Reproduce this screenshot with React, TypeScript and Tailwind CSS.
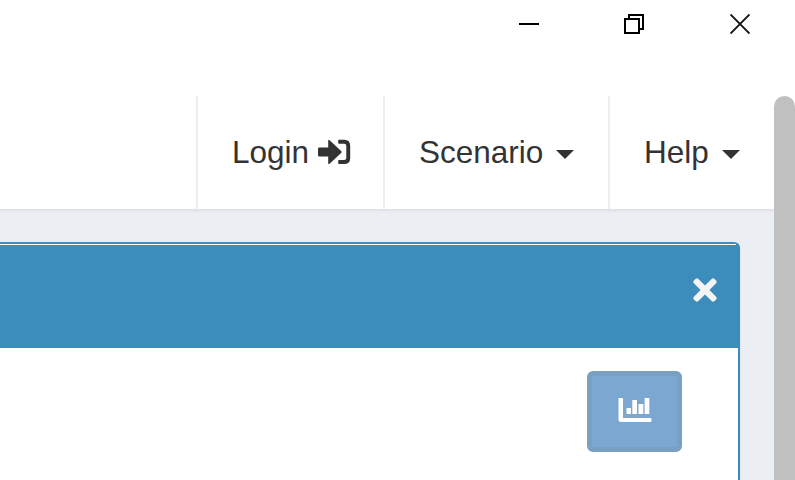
import { FaTimes } from "react-icons/fa";

const INK = "#333333";

function Caret() {
  return (
    <svg className="ml-[13px] mt-[5px] block h-[9px] w-[18px] shrink-0" viewBox="0 0 18 9" fill={INK}>
      <path d="M0 0H18L9 9Z" />
    </svg>
  );
}

function SignInIcon() {
  return (
    <svg className="ml-[8.5px] mt-px block h-[26px] w-[34px] shrink-0" viewBox="0 0 34 26" fill={INK}>
      <path d="M1.2 8.5H10.2V2Q10.2 .2 11.6 1.2L23.4 12.3Q24.1 13 23.4 13.7L11.6 24.8Q10.2 25.8 10.2 24V17.4H1.2Q0 17.4 0 16.2V9.7Q0 8.5 1.2 8.5Z" />
      <path d="M21 .8H26.3Q32.2 .8 32.2 7V19Q32.2 25 26.3 25H21Q20.2 25 20.2 24.2V21.8Q20.2 21 21 21H26.2Q28.3 21 28.3 18.9V7Q28.3 4.8 26.2 4.8H21Q20.2 4.8 20.2 4V1.6Q20.2 .8 21 .8Z" />
    </svg>
  );
}

function TitleBar() {
  return (
    <div className="flex h-24 items-start justify-end pr-[45px] pt-[14px]">
      <svg className="mr-[85px] h-5 w-5" viewBox="0 0 20 20">
        <path d="M0 9H20V11H0Z" />
      </svg>
      <svg className="mr-[86px] h-5 w-5" viewBox="0 0 20 20" fill="none" stroke="#000" strokeWidth="2">
        <path d="M5 5V1H19V15H15M1 5H15V19H1Z" />
      </svg>
      <svg className="h-5 w-5" viewBox="0 0 20 20" fill="none" stroke="#111" strokeWidth="1.9">
        <path d="M.5 .5L19.5 19.5M19.5 .5L.5 19.5" />
      </svg>
    </div>
  );
}

function ChartIcon() {
  return (
    <svg className="mb-[3px] block h-6 w-[34px]" viewBox="0 0 34 24" fill="#fff">
      <path d="M1 0H4Q5 0 5 1V20H32.5Q33.5 20 33.5 21V23Q33.5 24 32.5 24H3Q.5 24 .5 21.5V.5Q.5 0 1 0Z" />
      <path d="M8.5 10H13V16H8.5ZM14.3 2H19V16H14.3ZM20.5 6H25.3V16H20.5ZM26.6 0H31.3V16H26.6Z" />
    </svg>
  );
}

export default function App() {
  return (
    <div className="flex h-[480px] w-[795px] flex-col overflow-hidden bg-white font-['Liberation_Sans',Arial,sans-serif]">
      <TitleBar />
      <div className="flex min-h-0 flex-1">
        <div className="flex min-w-0 flex-1 flex-col overflow-hidden bg-[#ebeef3]">
          <nav className="-ml-2 flex h-[113px] shrink-0 justify-end bg-white text-[31.5px] leading-[36px] text-[#333] shadow-[0_1px_4px_rgba(0,0,0,0.09)]">
            <a className="flex w-[187px] items-center border-l-2 border-[#eee] pb-[2px] pl-[34px]">
              <span>Login</span>
              <SignInIcon />
            </a>
            <a className="flex w-[225px] items-center border-l-2 border-[#eee] pb-[2px] pl-[34px]">
              <span>Scenario</span>
              <Caret />
            </a>
            <a className="flex w-[166px] items-center border-l-2 border-[#eee] pb-[2px] pl-[34px]">
              <span>Help</span>
              <Caret />
            </a>
          </nav>
          <main className="flex min-h-0 flex-1 pr-[34px] pt-[33px]">
            <section className="flex flex-1 flex-col rounded-tr-[6px] border-r-2 border-t-2 border-[#3c8dbc] bg-[#3c8dbc] shadow-[0_1px_2px_rgba(0,0,0,0.12)]">
              <div className="mr-[2px] h-px shrink-0 bg-white" />
              <header className="flex h-[103px] shrink-0 justify-end pr-[21px] pt-[28px]">
                <FaTimes className="h-[34px] w-[24px] text-[#f4f4f4]" />
              </header>
              <div className="flex flex-1 items-start justify-end bg-white pr-14 pt-[23px]">
                <button className="flex h-[81px] w-[95px] items-center justify-center rounded-[6px] border-[5px] border-[#79a0c3] bg-[#7ba7d0]">
                  <ChartIcon />
                </button>
              </div>
            </section>
          </main>
        </div>
        <div className="w-[21px] shrink-0 bg-white">
          <div className="h-[500px] rounded-t-[10.5px] bg-[#c0c0c0]" />
        </div>
      </div>
    </div>
  );
}
